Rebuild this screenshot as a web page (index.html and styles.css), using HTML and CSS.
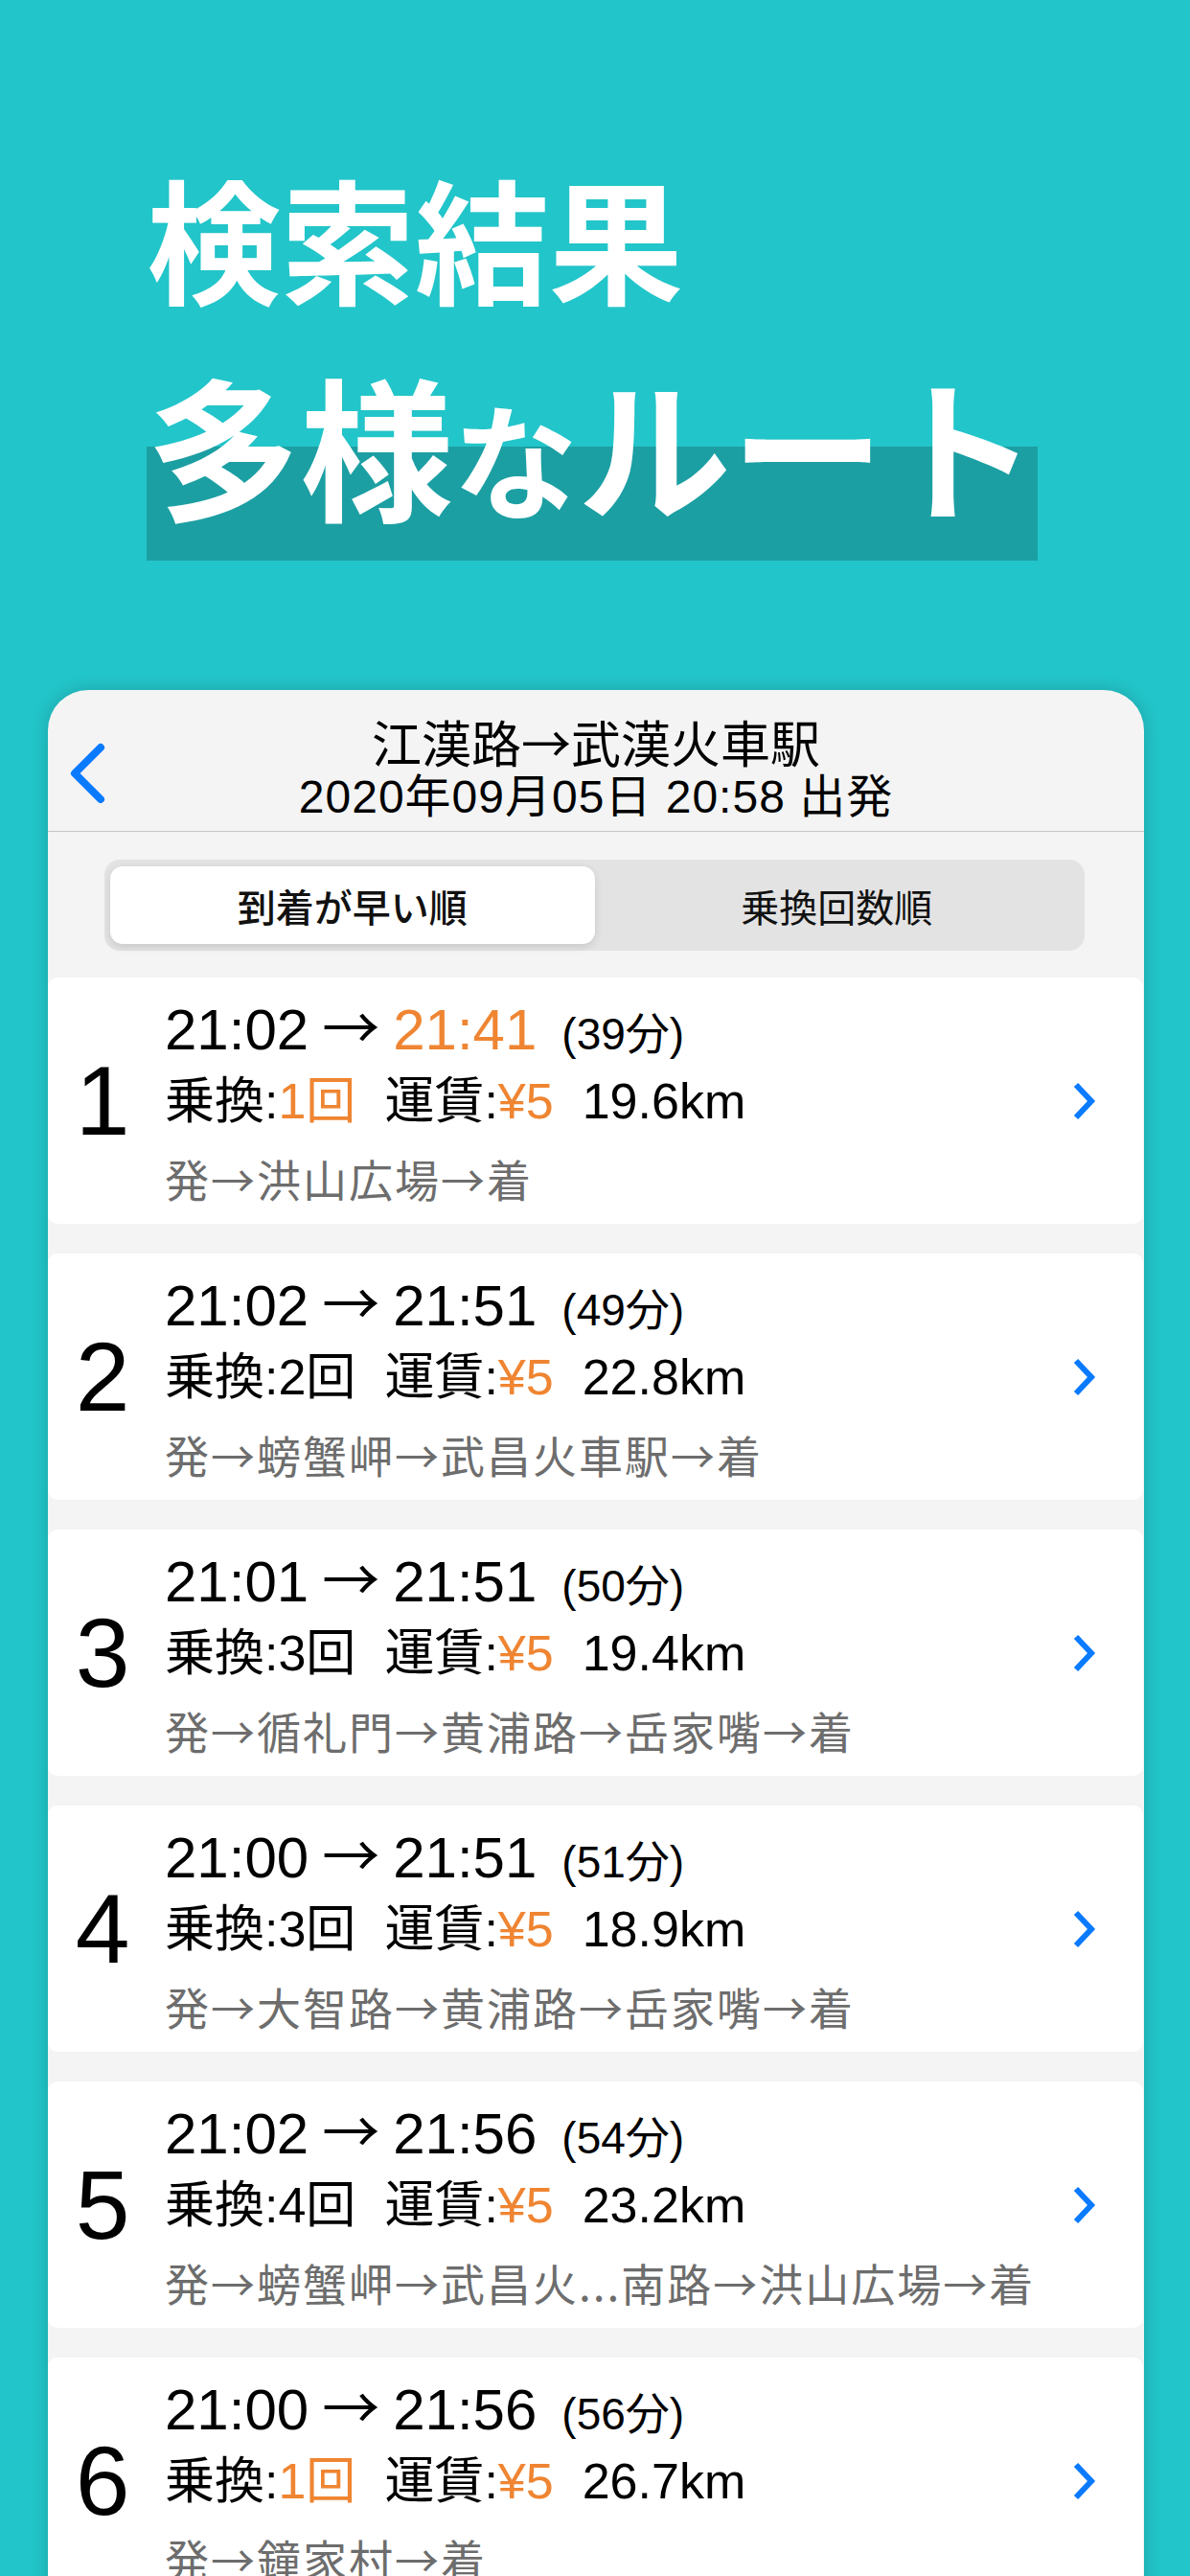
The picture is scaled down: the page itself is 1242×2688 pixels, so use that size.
FILE: index.html
```html
<!DOCTYPE html>
<html lang="ja">
<head>
    <meta charset="UTF-8">
    <title>検索結果</title>
    <link rel="stylesheet" href="styles.css">
</head>
<body>
<header class="Hero">
    <h1 class="HeroTitle">検索結果</h1>
    <h2 class="HeroSub"><span class="HeroMark">多様<span class="HeroKana">な</span>ルート</span></h2>
</header>

<section class="Phone">
    <div class="NavBar">
        <a class="BackLink" href="#">
            <svg width="40" height="68" viewBox="0 0 40 68">
                <polyline points="33,7 6,34 33,61" fill="none" stroke="#0a7aff" stroke-width="8"
                          stroke-linecap="round" stroke-linejoin="round"/>
            </svg>
        </a>
        <div class="NavTitle">
            <div class="NavRoute">江漢路→武漢火車駅</div>
            <div class="NavDate">2020年09月05日 20:58 出発</div>
        </div>
    </div>

    <div class="SortBar">
        <div class="Segment">
            <div class="SegmentItem Selected">到着が早い順</div>
            <div class="SegmentItem">乗換回数順</div>
        </div>
    </div>

    <div class="RouteList">
        <div class="RouteRow">
            <div class="RouteNo">1</div>
            <div class="RouteInfo">
                <div class="RouteTime">21:02<span class="Arrow">→</span><span class="Accent">21:41</span><span class="Duration">(39分)</span></div>
                <div class="RouteFare">乗換:<span class="Accent">1回</span><span class="Gap">運賃:<span class="Accent">¥5</span></span><span class="Gap">19.6km</span></div>
                <div class="RouteStops">発→洪山広場→着</div>
            </div>
            <svg class="RouteArrow" width="28" height="40" viewBox="0 0 28 40">
                <polyline points="5,3 21,20 5,37" fill="none" stroke="#0a7aff" stroke-width="6"/>
            </svg>
        </div>
        <div class="RouteRow">
            <div class="RouteNo">2</div>
            <div class="RouteInfo">
                <div class="RouteTime">21:02<span class="Arrow">→</span>21:51<span class="Duration">(49分)</span></div>
                <div class="RouteFare">乗換:2回<span class="Gap">運賃:<span class="Accent">¥5</span></span><span class="Gap">22.8km</span></div>
                <div class="RouteStops">発→螃蟹岬→武昌火車駅→着</div>
            </div>
            <svg class="RouteArrow" width="28" height="40" viewBox="0 0 28 40">
                <polyline points="5,3 21,20 5,37" fill="none" stroke="#0a7aff" stroke-width="6"/>
            </svg>
        </div>
        <div class="RouteRow">
            <div class="RouteNo">3</div>
            <div class="RouteInfo">
                <div class="RouteTime">21:01<span class="Arrow">→</span>21:51<span class="Duration">(50分)</span></div>
                <div class="RouteFare">乗換:3回<span class="Gap">運賃:<span class="Accent">¥5</span></span><span class="Gap">19.4km</span></div>
                <div class="RouteStops">発→循礼門→黄浦路→岳家嘴→着</div>
            </div>
            <svg class="RouteArrow" width="28" height="40" viewBox="0 0 28 40">
                <polyline points="5,3 21,20 5,37" fill="none" stroke="#0a7aff" stroke-width="6"/>
            </svg>
        </div>
        <div class="RouteRow">
            <div class="RouteNo">4</div>
            <div class="RouteInfo">
                <div class="RouteTime">21:00<span class="Arrow">→</span>21:51<span class="Duration">(51分)</span></div>
                <div class="RouteFare">乗換:3回<span class="Gap">運賃:<span class="Accent">¥5</span></span><span class="Gap">18.9km</span></div>
                <div class="RouteStops">発→大智路→黄浦路→岳家嘴→着</div>
            </div>
            <svg class="RouteArrow" width="28" height="40" viewBox="0 0 28 40">
                <polyline points="5,3 21,20 5,37" fill="none" stroke="#0a7aff" stroke-width="6"/>
            </svg>
        </div>
        <div class="RouteRow">
            <div class="RouteNo">5</div>
            <div class="RouteInfo">
                <div class="RouteTime">21:02<span class="Arrow">→</span>21:56<span class="Duration">(54分)</span></div>
                <div class="RouteFare">乗換:4回<span class="Gap">運賃:<span class="Accent">¥5</span></span><span class="Gap">23.2km</span></div>
                <div class="RouteStops">発→螃蟹岬→武昌火...南路→洪山広場→着</div>
            </div>
            <svg class="RouteArrow" width="28" height="40" viewBox="0 0 28 40">
                <polyline points="5,3 21,20 5,37" fill="none" stroke="#0a7aff" stroke-width="6"/>
            </svg>
        </div>
        <div class="RouteRow">
            <div class="RouteNo">6</div>
            <div class="RouteInfo">
                <div class="RouteTime">21:00<span class="Arrow">→</span>21:56<span class="Duration">(56分)</span></div>
                <div class="RouteFare">乗換:<span class="Accent">1回</span><span class="Gap">運賃:<span class="Accent">¥5</span></span><span class="Gap">26.7km</span></div>
                <div class="RouteStops">発→鐘家村→着</div>
            </div>
            <svg class="RouteArrow" width="28" height="40" viewBox="0 0 28 40">
                <polyline points="5,3 21,20 5,37" fill="none" stroke="#0a7aff" stroke-width="6"/>
            </svg>
        </div>
    </div>
</section>
</body>
</html>
```

FILE: styles.css
```css
html, body {
    margin: 0;
    padding: 0;
}

body {
    width: 1242px;
    height: 2688px;
    overflow: hidden;
    background: #22c5c9;
    font-family: "Liberation Sans", "Noto Sans CJK JP", sans-serif;
    color: #000;
}

.Hero {
    padding: 176px 0 0 153px;
    font-family: "Noto Sans CJK JP", sans-serif;
    color: #fff;
}

.HeroTitle {
    margin: 0;
    font-size: 140px;
    line-height: 140px;
    font-weight: 700;
}

.HeroSub {
    margin: 66px 0 0 0;
    font-size: 160px;
    line-height: 160px;
    font-weight: 700;
}

.HeroMark {
    display: inline-block;
    height: 160px;
    padding-bottom: 43px;
    background: linear-gradient(to bottom, transparent 84px, #1c9fa3 84px);
}

.HeroKana {
    font-size: 130px;
    line-height: 0;
}

.Phone {
    margin: 135px 48px 0 50px;
    background: #f4f4f4;
    border-radius: 42px 42px 0 0;
    box-shadow: 0 0 18px rgba(0, 0, 0, 0.18);
    overflow: hidden;
}

.NavBar {
    display: grid;
    grid-template-columns: 1fr auto 1fr;
    align-items: center;
    padding: 24px 0 7px 0;
    border-bottom: 1px solid #c6c6c6;
}

.BackLink {
    justify-self: start;
    margin: 10px 0 0 22px;
    display: flex;
}

.NavTitle {
    text-align: center;
}

.NavRoute {
    font-family: "Noto Sans CJK JP", sans-serif;
    font-size: 52px;
    line-height: 60px;
    height: 60px;
}

.NavDate {
    font-size: 48px;
    line-height: 56px;
    height: 56px;
    letter-spacing: 1px;
}

.SortBar {
    padding: 29px 62px 28px 59px;
}

.Segment {
    display: grid;
    grid-template-columns: 1fr 1fr;
    height: 95px;
    box-sizing: border-box;
    padding: 7px 6px;
    background: #e3e3e3;
    border-radius: 16px;
}

.SegmentItem {
    display: flex;
    align-items: center;
    justify-content: center;
    font-family: "Noto Sans CJK JP", sans-serif;
    font-size: 40px;
    color: #111;
}

.SegmentItem.Selected {
    background: #fff;
    border-radius: 13px;
    font-weight: 500;
    box-shadow: 0 3px 8px rgba(0, 0, 0, 0.12);
}

.RouteList {
    display: flex;
    flex-direction: column;
    gap: 31px;
}

.RouteRow {
    display: flex;
    align-items: center;
    height: 257px;
    box-sizing: border-box;
    padding: 9px 47px 8px 0;
    margin-right: 1px;
    background: #fff;
    border-radius: 10px;
}

.RouteNo {
    width: 114px;
    flex-shrink: 0;
    text-align: center;
    font-size: 102px;
    line-height: 120px;
}

.RouteInfo {
    flex: 1;
    margin-left: 8px;
}

.RouteInfo > div {
    height: 80px;
    line-height: 80px;
    white-space: nowrap;
}

.RouteTime {
    font-size: 60px;
}

.Arrow {
    font-family: "Noto Sans CJK JP", sans-serif;
    margin: 0 14px;
}

.Duration {
    margin-left: 26px;
    font-size: 46px;
}

.RouteFare {
    font-size: 52px;
}

.Gap {
    margin-left: 30px;
}

.RouteStops {
    font-family: "Noto Sans CJK JP", sans-serif;
    font-size: 46px;
    letter-spacing: 2px;
    color: #6d6d6d;
}

.Accent {
    color: #ef8532;
}

.RouteArrow {
    flex-shrink: 0;
}
```
